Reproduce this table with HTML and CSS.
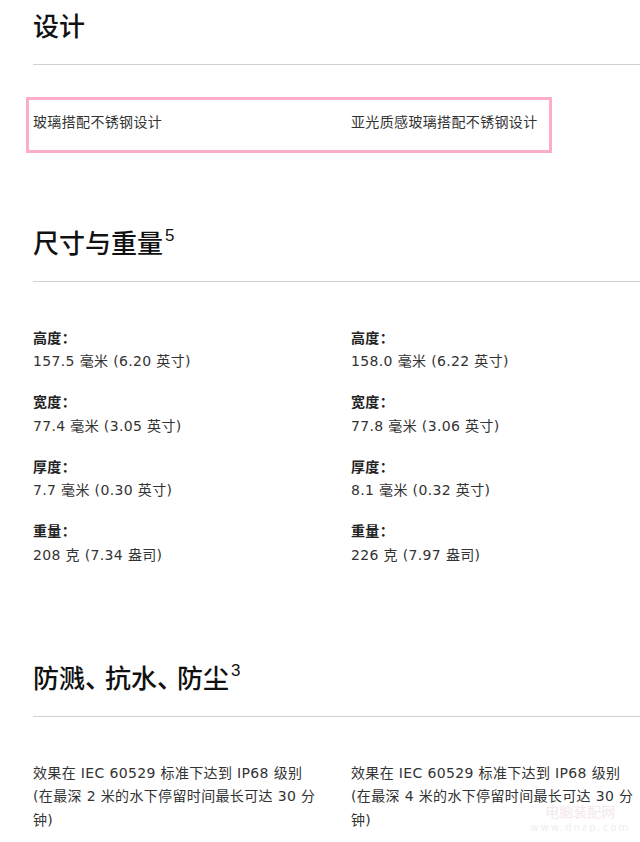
FILE: index.html
```html
<!DOCTYPE html>
<html lang="zh-CN">

<head>
  <meta charset="UTF-8">
  <meta name="viewport" content="width=device-width, initial-scale=1.0">
  <title>技术规格</title>
  <link rel="stylesheet" href="styles.css">
</head>

<body>

  <div class="specs">

    <!-- 设计 -->
    <section class="spec-section">
      <h2 class="spec-title">设计</h2>
      <div class="spec-row highlight">
        <div class="spec-col">玻璃搭配不锈钢设计</div>
        <div class="spec-col">亚光质感玻璃搭配不锈钢设计</div>
      </div>
    </section>

    <!-- 尺寸与重量 -->
    <section class="spec-section">
      <h2 class="spec-title">尺寸与重量<sup>5</sup></h2>
      <div class="spec-row">
        <div class="spec-col">
          <dl class="spec-item"><dt>高度：</dt><dd>157.5 毫米 (6.20 英寸)</dd></dl>
          <dl class="spec-item"><dt>宽度：</dt><dd>77.4 毫米 (3.05 英寸)</dd></dl>
          <dl class="spec-item"><dt>厚度：</dt><dd>7.7 毫米 (0.30 英寸)</dd></dl>
          <dl class="spec-item"><dt>重量：</dt><dd>208 克 (7.34 盎司)</dd></dl>
        </div>
        <div class="spec-col">
          <dl class="spec-item"><dt>高度：</dt><dd>158.0 毫米 (6.22 英寸)</dd></dl>
          <dl class="spec-item"><dt>宽度：</dt><dd>77.8 毫米 (3.06 英寸)</dd></dl>
          <dl class="spec-item"><dt>厚度：</dt><dd>8.1 毫米 (0.32 英寸)</dd></dl>
          <dl class="spec-item"><dt>重量：</dt><dd>226 克 (7.97 盎司)</dd></dl>
        </div>
      </div>
    </section>

    <!-- 防溅、抗水、防尘 -->
    <section class="spec-section">
      <h2 class="spec-title">防溅<span class="punct">、</span>抗水<span class="punct">、</span>防尘<sup>3</sup></h2>
      <div class="spec-row">
        <div class="spec-col narrow">效果在 IEC 60529 标准下达到 IP68 级别 (在最深 2 米的水下停留时间最长可达 30 分钟)</div>
        <div class="spec-col narrow">效果在 IEC 60529 标准下达到 IP68 级别 (在最深 4 米的水下停留时间最长可达 30 分钟)</div>
      </div>
    </section>

  </div>

  <div class="watermark">电脑装配网<span>www.dnzp.com</span></div>

</body>

</html>
```

FILE: styles.css
```css
/* Page */
body {
  margin: 0;
  padding: 0;
  font-family: 'DejaVu Sans', 'Noto Sans CJK SC', sans-serif;
  color: #333;
  background: #fff;
  overflow: hidden;
}

.specs {
  padding-left: 33px;
}

/* Section headings */
.spec-section {
  margin-bottom: 76px;
}

.spec-section:first-child {
  padding-top: 9px;
  margin-bottom: 73px;
}

.spec-title {
  margin: 0;
  padding-bottom: 23px;
  font-family: 'Noto Sans CJK SC', sans-serif;
  font-size: 26px;
  line-height: 32px;
  font-weight: 500;
  color: #111;
  border-bottom: 1px solid #d2d2d2;
}

.spec-title sup {
  font-family: 'Liberation Sans', sans-serif;
  font-size: 17px;
  font-weight: 400;
  vertical-align: top;
  line-height: 20px;
  margin-left: 2px;
}

.spec-title .punct {
  letter-spacing: -6px;
}

/* Two columns of values */
.spec-row {
  display: grid;
  grid-template-columns: 318px 318px;
  margin-top: 45px;
  font-size: 14px;
  line-height: 23.5px;
  letter-spacing: 0.35px;
}

.spec-row.highlight {
  width: 512px;
  margin-top: 32px;
  margin-left: -7px;
  padding: 11px 4px 15px;
  border: 3px solid #fbadcb;
  grid-template-columns: 318px 194px;
}

.spec-col.narrow {
  padding-right: 32px;
}

.spec-item {
  margin: 0 0 17.5px;
}

.spec-item dt {
  font-weight: 600;
  color: #222;
}

.spec-item dd {
  margin: 0;
}

/* Site watermark */
.watermark {
  position: absolute;
  right: 10px;
  bottom: 6px;
  z-index: -1;
  font-size: 14px;
  line-height: 16px;
  color: #f3e9ec;
  text-align: center;
  pointer-events: none;
}

.watermark span {
  display: block;
  font-size: 10px;
  letter-spacing: 2px;
  color: #eeeeee;
}
```
